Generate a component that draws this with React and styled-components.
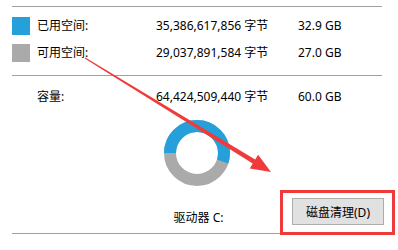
import React from "react";
import styled, { createGlobalStyle } from "styled-components";

const Global = createGlobalStyle`
  html, body { margin: 0; padding: 0; background: #ffffff; }
  body { width: 398px; height: 250px; overflow: hidden; }
`;

const Page = styled.div`
  position: relative;
  width: 398px;
  height: 250px;
  background: #ffffff;
  font-family: "Noto Sans", "Noto Sans CJK SC", sans-serif;
  font-size: 12px;
  color: #000000;
  padding-top: 6px;
  box-sizing: border-box;
`;

const Rule = styled.div`
  margin: ${(p) => p.$mt || 0}px 0 0 12px;
  width: 370px;
  height: 1px;
  background: #a0a0a0;
`;

const Grid = styled.div`
  display: grid;
  grid-template-columns: 25px 119px 142px auto;
  row-gap: ${(p) => p.$gap || 9}px;
  padding-left: 12px;
  margin-top: ${(p) => p.$mt || 0}px;
  align-items: center;
`;

const Swatch = styled.div`
  width: 18px;
  height: 18px;
  background: ${(p) => p.$color};
`;

const Cell = styled.div`
  line-height: 18px;
  white-space: nowrap;
`;

const Bottom = styled.div`
  display: flex;
  align-items: flex-end;
  margin-top: 14px;
`;

const ChartCol = styled.div`
  margin-left: 132px;
  width: 130px;
  display: flex;
  flex-direction: column;
  align-items: center;
`;

const DriveLabel = styled.div`
  margin-top: 24px;
  line-height: 16px;
  padding-left: 3px;
`;

const CleanButton = styled.button`
  margin-left: 30px;
  margin-bottom: 1px;
  width: 92px;
  height: 27px;
  background: #e1e1e1;
  border: 1px solid #adadad;
  font-family: "Noto Sans", "Noto Sans CJK SC", sans-serif;
  font-size: 12px;
  color: #000;
  padding: 0;
`;

const Highlight = styled.div`
  position: absolute;
  left: 280px;
  top: 190px;
  width: 115px;
  height: 45px;
  box-sizing: border-box;
  border: 3px solid #ee3a3a;
  pointer-events: none;
`;

const Overlay = styled.svg`
  position: absolute;
  left: 0;
  top: 0;
  pointer-events: none;
`;

function Donut() {
  const r = 27;
  const c = 2 * Math.PI * r;
  const used = 35386617856 / 64424509440;
  return (
    <svg width="66" height="66" viewBox="0 0 66 66">
      <circle cx="33" cy="33" r={r} fill="none" stroke="#aaaaaa" strokeWidth="12" />
      <circle
        cx="33"
        cy="33"
        r={r}
        fill="none"
        stroke="#26a0da"
        strokeWidth="12"
        strokeDasharray={`${c * used} ${c}`}
        transform="rotate(180 33 33)"
      />
    </svg>
  );
}

function Arrow() {
  const sx = 85, sy = 58, tx = 271, ty = 172;
  const dx = tx - sx, dy = ty - sy;
  const len = Math.hypot(dx, dy);
  const ux = dx / len, uy = dy / len;
  const nx = -uy, ny = ux;
  const bx = tx - 20 * ux, by = ty - 20 * uy;
  const pts = [
    [sx + 0.5 * nx, sy + 0.5 * ny],
    [bx + 2.4 * nx, by + 2.4 * ny],
    [bx + 8 * nx, by + 8 * ny],
    [tx, ty],
    [bx - 8 * nx, by - 8 * ny],
    [bx - 2.4 * nx, by - 2.4 * ny],
    [sx - 0.5 * nx, sy - 0.5 * ny],
  ]
    .map((p) => p.map((v) => v.toFixed(1)).join(","))
    .join(" ");
  return (
    <Overlay width="398" height="250">
      <polygon points={pts} fill="#ef3b3b" />
    </Overlay>
  );
}

export default function App() {
  return (
    <Page>
      <Global />
      <Rule />
      <Grid $mt={10}>
        <Swatch $color="#26a0da" />
        <Cell>已用空间:</Cell>
        <Cell>35,386,617,856 字节</Cell>
        <Cell>32.9 GB</Cell>
        <Swatch $color="#aaaaaa" />
        <Cell>可用空间:</Cell>
        <Cell>29,037,891,584 字节</Cell>
        <Cell>27.0 GB</Cell>
      </Grid>
      <Rule $mt={13} />
      <Grid $mt={12}>
        <span />
        <Cell>容量:</Cell>
        <Cell>64,424,509,440 字节</Cell>
        <Cell>60.0 GB</Cell>
      </Grid>
      <Bottom>
        <ChartCol>
          <Donut />
          <DriveLabel>驱动器 C:</DriveLabel>
        </ChartCol>
        <CleanButton>磁盘清理(D)</CleanButton>
      </Bottom>
      <Rule $mt={7} />
      <Highlight />
      <Arrow />
    </Page>
  );
}
